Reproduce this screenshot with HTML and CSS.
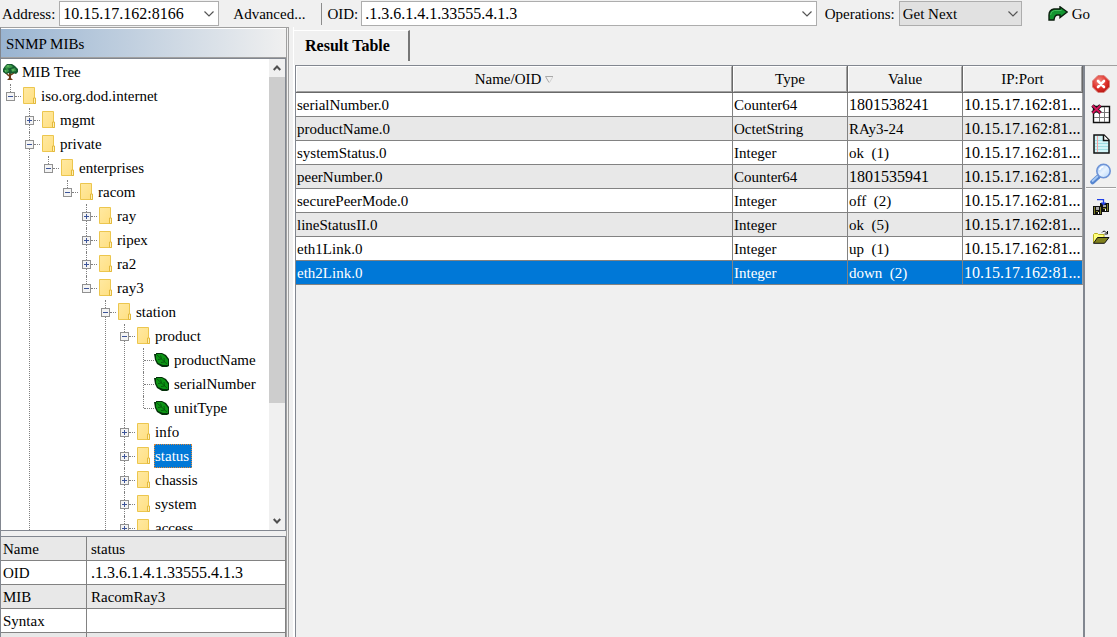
FILE: index.html
```html
<!DOCTYPE html>
<html lang="en">
<head>
<meta charset="utf-8">
<title>MIB Browser</title>
<link rel="stylesheet" href="styles.css">
</head>
<body>
<svg class="defs" aria-hidden="true">
  <defs>
    <linearGradient id="gFolder" x1="0" y1="0" x2="1" y2="1"><stop offset="0" stop-color="#ffe9a2"/><stop offset="1" stop-color="#ffdf80"/></linearGradient>
    <radialGradient id="gRed" cx=".4" cy=".3" r=".8"><stop offset="0" stop-color="#f48a80"/><stop offset=".6" stop-color="#dc2c26"/><stop offset="1" stop-color="#a81512"/></radialGradient>
    <linearGradient id="gLens" x1="0" y1="0" x2="1" y2="1"><stop offset="0" stop-color="#8fbcf5"/><stop offset=".5" stop-color="#e8f3ff"/><stop offset="1" stop-color="#b5d6fa"/></linearGradient>
    <symbol id="folder" viewBox="0 0 16 18"><path d="M2.500 .5h11v11h1v5h-12z" fill="url(#gFolder)" stroke="#ecc64e"/><path d="M12.500 16v-5h2v5.500h-2z" fill="#fff0b8" stroke="#e3b93c"/></symbol>
    <symbol id="leaf" viewBox="0 0 16 16"><path d="M0 2h2V1h6l4 2 3 4v7l-2 1H8l-5-3-2-4z" fill="#04300a"/><path d="M2 3l1-1h5l3 2 3 4v5H9L4 11 2 7z" fill="#0c9414"/><path d="m3 3 10 9M6.500 3.500l1 3M4 7.500l3.500-.5M10 6l.5 4M7 10.500l3.500-.5" stroke="#04500a" stroke-width=".8" fill="none"/></symbol>
    <symbol id="plus" viewBox="0 0 9 9"><rect x=".5" y=".5" width="8" height="8" fill="#f4f4f4" stroke="#919191"/><path d="M2 4.500h5M4.500 2v5" stroke="#3d5599"/></symbol>
    <symbol id="minus" viewBox="0 0 9 9"><rect x=".5" y=".5" width="8" height="8" fill="#f4f4f4" stroke="#919191"/><path d="M2 4.500h5" stroke="#3d5599"/></symbol>
    <symbol id="chev" viewBox="0 0 10 6"><path d="m.5.5 4.500 4.500L9.500.5" fill="none" stroke="#555" stroke-width="1.200"/></symbol>
  </defs>
</svg>

<header class="toolbar">
  <label for="address">Address:</label>
  <span class="combo combo-address"><input id="address" type="text" class="num" value="10.15.17.162:8166"><button type="button" aria-label="Address history"><svg width="10" height="6"><use href="#chev"/></svg></button></span>
  <button type="button" class="flat advanced">Advanced...</button>
  <label for="oid" class="oid-label">OID:</label>
  <span class="combo combo-oid"><input id="oid" type="text" class="num" value=".1.3.6.1.4.1.33555.4.1.3"><button type="button" aria-label="OID history"><svg width="10" height="6"><use href="#chev"/></svg></button></span>
  <label for="ops" class="ops-label">Operations:</label>
  <span class="select-wrap"><select id="ops"><option>Get Next</option></select><svg width="10" height="6"><use href="#chev"/></svg></span>
  <button type="button" class="flat go"><svg width="20" height="15" viewBox="0 0 20 15"><path d="M1 14V9q0-5 5-6h6V.8L19.200 6 12 11.500V9H9Q6.500 9.500 6 14z" fill="#12952f" stroke="#0a1d0d" stroke-width="1.400"/><path d="M2.500 9q.5-4 4-4.500h7" stroke="#40b95a" fill="none"/></svg>Go</button>
</header>

<main class="workspace">
  <aside class="side">
    <h2 class="side-title">SNMP MIBs</h2>
    <div class="tree-box">
      <div class="tree">
        <div class="row root"><svg width="16" height="18" viewBox="0 0 16 18"><path d="M7 9h2v6l2 2H5l2-2z" fill="#6b3a16"/><path d="M3 9 7 13M13 9l-4 3" stroke="#6b3a16" stroke-width="1.500"/><path d="M5 1h5l3 2 3 3v3l-2 2-3-1-2 1-2-1-3 1-3-2V6l2-3z" fill="#175c30"/><path d="M5 2h4l2 2-3 1-4 1-1-2zM2 7l4-1 1 2-3 2zM9 6l4-1 1 3-4 1z" fill="#3d9c48"/><path d="M5 3h2M10 7h2M3 8h1" stroke="#7bc873"/></svg><span class="label">MIB Tree</span></div>
        <ul>
          <li><div class="row"><svg class="exp" width="9" height="9"><use href="#minus"/></svg><i></i><svg width="16" height="18"><use href="#folder"/></svg><span class="label">iso.org.dod.internet</span></div>
          <ul>
            <li><div class="row"><svg class="exp" width="9" height="9"><use href="#plus"/></svg><i></i><svg width="16" height="18"><use href="#folder"/></svg><span class="label">mgmt</span></div></li>
            <li class="more"><div class="row"><svg class="exp" width="9" height="9"><use href="#minus"/></svg><i></i><svg width="16" height="18"><use href="#folder"/></svg><span class="label">private</span></div>
            <ul>
              <li><div class="row"><svg class="exp" width="9" height="9"><use href="#minus"/></svg><i></i><svg width="16" height="18"><use href="#folder"/></svg><span class="label">enterprises</span></div>
              <ul>
                <li><div class="row"><svg class="exp" width="9" height="9"><use href="#minus"/></svg><i></i><svg width="16" height="18"><use href="#folder"/></svg><span class="label">racom</span></div>
                <ul>
                  <li><div class="row"><svg class="exp" width="9" height="9"><use href="#plus"/></svg><i></i><svg width="16" height="18"><use href="#folder"/></svg><span class="label">ray</span></div></li>
                  <li><div class="row"><svg class="exp" width="9" height="9"><use href="#plus"/></svg><i></i><svg width="16" height="18"><use href="#folder"/></svg><span class="label">ripex</span></div></li>
                  <li><div class="row"><svg class="exp" width="9" height="9"><use href="#plus"/></svg><i></i><svg width="16" height="18"><use href="#folder"/></svg><span class="label">ra2</span></div></li>
                  <li><div class="row"><svg class="exp" width="9" height="9"><use href="#minus"/></svg><i></i><svg width="16" height="18"><use href="#folder"/></svg><span class="label">ray3</span></div>
                  <ul>
                    <li class="more"><div class="row"><svg class="exp" width="9" height="9"><use href="#minus"/></svg><i></i><svg width="16" height="18"><use href="#folder"/></svg><span class="label">station</span></div>
                    <ul>
                      <li><div class="row"><svg class="exp" width="9" height="9"><use href="#minus"/></svg><i></i><svg width="16" height="18"><use href="#folder"/></svg><span class="label">product</span></div>
                      <ul>
                        <li><div class="row leaf"><i></i><svg width="16" height="16"><use href="#leaf"/></svg><span class="label">productName</span></div></li>
                        <li><div class="row leaf"><i></i><svg width="16" height="16"><use href="#leaf"/></svg><span class="label">serialNumber</span></div></li>
                        <li><div class="row leaf"><i></i><svg width="16" height="16"><use href="#leaf"/></svg><span class="label">unitType</span></div></li>
                      </ul></li>
                      <li><div class="row"><svg class="exp" width="9" height="9"><use href="#plus"/></svg><i></i><svg width="16" height="18"><use href="#folder"/></svg><span class="label">info</span></div></li>
                      <li><div class="row"><svg class="exp" width="9" height="9"><use href="#plus"/></svg><i></i><svg width="16" height="18"><use href="#folder"/></svg><span class="label selected">status</span></div></li>
                      <li><div class="row"><svg class="exp" width="9" height="9"><use href="#plus"/></svg><i></i><svg width="16" height="18"><use href="#folder"/></svg><span class="label">chassis</span></div></li>
                      <li><div class="row"><svg class="exp" width="9" height="9"><use href="#plus"/></svg><i></i><svg width="16" height="18"><use href="#folder"/></svg><span class="label">system</span></div></li>
                      <li class="more"><div class="row"><svg class="exp" width="9" height="9"><use href="#plus"/></svg><i></i><svg width="16" height="18"><use href="#folder"/></svg><span class="label">access</span></div></li>
                    </ul></li>
                  </ul></li>
                </ul></li>
              </ul></li>
            </ul></li>
          </ul></li>
        </ul>
      </div>
      <div class="scrollbar">
        <button type="button" aria-label="Scroll up"><svg width="8" height="6" viewBox="0 0 8 6"><path d="M.7 5 4 1.500 7.300 5" fill="none" stroke="#505050" stroke-width="2"/></svg></button>
        <div class="track"><div class="thumb"></div></div>
        <button type="button" aria-label="Scroll down"><svg width="8" height="6" viewBox="0 0 8 6"><path d="M.7 1 4 4.500 7.300 1" fill="none" stroke="#505050" stroke-width="2"/></svg></button>
      </div>
    </div>
    <div class="props-box">
      <table class="props">
        <tr><th scope="row">Name</th><td>status</td></tr>
        <tr><th scope="row">OID</th><td class="num">.1.3.6.1.4.1.33555.4.1.3</td></tr>
        <tr><th scope="row">MIB</th><td>RacomRay3</td></tr>
        <tr><th scope="row">Syntax</th><td></td></tr>
        <tr><th></th><td></td></tr>
      </table>
    </div>
  </aside>

  <section class="results">
    <div class="tabs"><button type="button" class="tab">Result Table</button></div>
    <div class="panel">
      <div class="grid-area">
        <table class="grid">
          <colgroup><col><col class="c-type"><col class="c-value"><col class="c-ip"></colgroup>
          <thead><tr><th><span>Name/OID <svg width="8" height="7" viewBox="0 0 8 7"><path d="M8 .5 4.500 6.500" stroke="#d0d0d0"/><path d="M8 .5H.5L4 6.500" fill="none" stroke="#a8a8a8"/></svg></span></th><th><span>Type</span></th><th><span>Value</span></th><th><span>IP:Port</span></th></tr></thead>
          <tbody>
            <tr><td>serialNumber.0</td><td>Counter64</td><td class="num">1801538241</td><td class="num">10.15.17.162:81...</td></tr>
            <tr><td>productName.0</td><td>OctetString</td><td>RAy3-24</td><td class="num">10.15.17.162:81...</td></tr>
            <tr><td>systemStatus.0</td><td>Integer</td><td>ok&nbsp; (1)</td><td class="num">10.15.17.162:81...</td></tr>
            <tr><td>peerNumber.0</td><td>Counter64</td><td class="num">1801535941</td><td class="num">10.15.17.162:81...</td></tr>
            <tr><td>securePeerMode.0</td><td>Integer</td><td>off&nbsp; (2)</td><td class="num">10.15.17.162:81...</td></tr>
            <tr><td>lineStatusII.0</td><td>Integer</td><td>ok&nbsp; (5)</td><td class="num">10.15.17.162:81...</td></tr>
            <tr><td>eth1Link.0</td><td>Integer</td><td>up&nbsp; (1)</td><td class="num">10.15.17.162:81...</td></tr>
            <tr class="current"><td>eth2Link.0</td><td>Integer</td><td>down&nbsp; (2)</td><td class="num">10.15.17.162:81...</td></tr>
          </tbody>
        </table>
      </div>
      <nav class="tools">
        <button type="button" aria-label="Stop"><svg width="18" height="18" viewBox="0 0 18 18"><path d="M6 .5h6L17.500 6v6L12 17.500H6L.5 12V6z" fill="url(#gRed)" stroke="#d9807a"/><path d="m6 6 6 6M12 6l-6 6" stroke="#fff" stroke-width="2.600" stroke-linecap="round"/></svg></button>
        <button type="button" aria-label="Clear table"><svg width="20" height="20" viewBox="0 0 20 20"><path d="M2.500 2.500h16v16h-16z" fill="#fff" stroke="#111" stroke-width="1.400"/><path d="M3 8.500h15M3 13.500h15M8.500 8v10M13.500 3v15" stroke="#777"/><path d="m1.500 1.500 8 7.500m0-7.500-8 7.500" stroke="#111" stroke-width="3.600"/><path d="m1.500 1.500 8 7.500m0-7.500-8 7.500" stroke="#d4145a" stroke-width="2"/></svg></button>
        <button type="button" aria-label="New page"><svg width="17" height="20" viewBox="0 0 17 20"><path d="M1 1h10l5 5v13H1z" fill="#d2f4f7" stroke="#111" stroke-width="1.500"/><path d="M2 6.500h8M2 9.500h13M2 12.500h13M2 15.500h13" stroke="#9edde4"/><path d="M4.500 2v16" stroke="#f4a3a3"/><path d="M10.500 1v5.500H16" fill="#fff" stroke="#111" stroke-width="1.500"/></svg></button>
        <button type="button" aria-label="Find"><svg width="22" height="22" viewBox="0 0 22 22"><path d="m8.500 13.500-6 5.500" stroke="#5585cf" stroke-width="4.500" stroke-linecap="round"/><path d="m8 13-6 5.500" stroke="#a5c8f4" stroke-width="1.800"/><circle cx="13.500" cy="8" r="6.700" fill="url(#gLens)" stroke="#6d93d6" stroke-width="1.600"/><path d="M9.500 7q1-3 4-3.500" stroke="#fff" stroke-width="1.500" fill="none"/></svg></button>
        <hr>
        <button type="button" aria-label="Save all"><svg width="16" height="16" viewBox="0 0 16 16"><path d="M7 4h9v9H7zM0 7h9v9H0z" fill="#111"/><path d="M1 8h1v7H1zM7 8h1v7H7zM14 5h1v7h-1zM3 12h2v1H3zM10 9h3v1h-3z" fill="#80802a"/><path d="M3 8h3v3H3zM10 6h3v2h-3z" fill="#aaa"/><path d="M5 13h1v2H5zM12 10h1v2h-1z" fill="#fff"/><path d="M4 .5h6.500V5M8.500 3.500l2 2 2-2" fill="none" stroke="#2040e8" stroke-width="1.300"/></svg></button>
        <button type="button" aria-label="Open"><svg width="17" height="14" viewBox="0 0 17 14"><path d="M.5 13V4.500l1-1h3l1 1H11V7" fill="#ffff7a" stroke="#b8b020"/><path d="M.5 13.300 4.500 7.500H16L11.500 13.300z" fill="#80801c" stroke="#111"/><path d="M9 2.500q2-3 5 .8M14.500 1v3h-3" fill="none" stroke="#111"/></svg></button>
      </nav>
    </div>
  </section>
</main>
</body>
</html>
```

FILE: styles.css
```css
* { box-sizing: border-box; }
body {
  margin: 0;
  height: 100vh;
  display: flex;
  flex-direction: column;
  overflow: hidden;
  background: #f0f0f0;
  color: #000;
  font: 15px/24px "Liberation Serif", "Times New Roman", serif;
}
button, input, select { font: inherit; color: inherit; margin: 0; }
button { padding: 0; border: 0; background: none; display: flex; align-items: center; justify-content: center; }
svg { display: block; flex: none; }
ul { list-style: none; margin: 0; padding: 0; }
.defs { position: absolute; width: 0; height: 0; }
.num { font-size: 16px; }

/* Toolbar */
.toolbar { display: flex; align-items: center; height: 27px; flex: none; padding-left: 2px; }
.combo { display: flex; height: 25px; background: #fff; border: 1px solid #adadad; }
.combo input { flex: 1; min-width: 0; border: 0; padding: 0 0 0 3px; background: none; outline: 0; }
.combo button { width: 18px; }
.combo-address { width: 160px; margin-left: 4px; }
.combo-oid { flex: 1; margin-left: 3px; }
.advanced { margin-left: 14px; }
.oid-label { margin-left: 16px; padding-left: 5px; border-left: 1px solid #8c8c8c; line-height: 22px; }
.ops-label { margin-left: 8px; }
.select-wrap { position: relative; width: 123px; margin-left: 4px; }
.select-wrap select { display: block; width: 100%; height: 25px; padding: 0 3px; appearance: none; border: 1px solid #adadad; border-radius: 0; background: #e1e1e1; }
.select-wrap svg { position: absolute; right: 4px; top: 10px; pointer-events: none; }
.go { gap: 4px; margin: 0 27px 0 26px; }

/* Workspace */
.workspace { flex: 1; min-height: 0; display: flex; }
.side { width: 289px; flex: none; display: flex; flex-direction: column; border-left: 1px solid #828790; border-right: 3px double #a0a0a0; border-top: 1px solid #a0a0a0; }
.side-title { margin: 0; height: 30px; padding-left: 5px; font: inherit; line-height: 31px; background: linear-gradient(90deg, #99b4d1, #f0f0f0); border-top: 1px solid #fff; border-bottom: 1px solid #a0a0a0; }
.tree-box { flex: 1; min-height: 0; display: flex; border: solid #828790; border-width: 1px 1px 1px 0; background: #fff; }
.tree { flex: 1; overflow: hidden; padding-top: 1px; }
.tree ul ul { margin-left: 19px; }
.row { display: flex; align-items: center; height: 24px; white-space: nowrap; }
.root { padding-left: 1px; gap: 3px; }
.label { padding: 0 1px; margin-left: 3px; }
.root .label { margin-left: 0; }
.selected { padding: 0 2px 0 0; border: 1px dotted #e08a3c; background: #0078d7; color: #fff; line-height: 22px; }
li { position: relative; }
li::before { content: ""; position: absolute; left: 9px; top: 0; height: 100%; border-left: 1px dotted #808080; }
li:last-child::before { height: 12px; }
li.more::before { height: 100%; }
.row .exp { margin-left: 5px; position: relative; }
.row i { width: 6px; border-top: 1px dotted #808080; }
.leaf i { width: 10px; margin-left: 10px; }

.scrollbar { width: 16px; display: flex; flex-direction: column; background: #f0f0f0; }
.scrollbar button { height: 18px; width: 100%; }
.track { flex: 1; }
.thumb { height: 75%; background: #cdcdcd; }

.props-box { flex: 0 0 101px; margin-top: 5px; overflow: hidden; border-top: 1px solid #828790; }
.props { width: 100%; border-collapse: separate; border-spacing: 0; table-layout: fixed; }
.props th, .props td { height: 24px; padding: 1px 0 0 4px; line-height: 22px; border-bottom: 1px solid #828282; text-align: left; font-weight: normal; background: #fff; }
.props th { width: 86px; padding-left: 2px; border-right: 1px solid #828282; }
.props td { border-right: 1px solid #828282; }
.props tr:nth-child(odd) > * { background: #e8e8e8; }

.results { flex: 1; min-width: 0; display: flex; flex-direction: column; margin-left: 4px; }
.tabs { display: flex; height: 38px; padding-top: 3px; border-left: 1px solid #fff; }
.tab { height: 31px; padding: 0 18px 0 11px; font-size: 16px; font-weight: bold; border-top: 1px solid #fff; border-right: 2px solid #767676; }
.panel { flex: 1; min-height: 0; display: flex; border-left: 2px solid #fff; }
.grid-area { flex: 1; min-width: 0; border: solid #828790; border-width: 1px 2px 0 1px; }
.grid { width: 100%; border-collapse: separate; border-spacing: 0; table-layout: fixed; }
.grid th, .grid td { white-space: nowrap; overflow: hidden; }
.c-type, .c-value { width: 115px; }
.c-ip { width: 120px; }
.grid th { height: 27px; padding: 0; font-weight: normal; border: solid #696969; border-width: 0 1px 1px 0; }
.grid th span { display: flex; gap: 4px; align-items: center; justify-content: center; height: 26px; border: 1px solid; border-color: #fff #a0a0a0 #a0a0a0 #fff; }
.grid td { height: 24px; padding: 1px 0 0 1px; line-height: 22px; background: #fff; border: solid #828282; border-width: 0 1px 1px 0; }
.grid td:last-child { border-right-color: #a0a0a0; }
.grid tbody tr:nth-child(even) td { background: #e8e8e8; }
.grid tbody tr.current td { background: #0078d7; color: #fff; }

.tools { width: 32px; flex: none; display: flex; flex-direction: column; align-items: center; padding: 3px 1px; border-top: 1px solid #a0a0a0; }
.tools button { width: 30px; height: 30px; flex: none; }
.tools hr { width: 100%; margin: -2px 0 3px; border: 0; border-top: 1px solid #a0a0a0; border-bottom: 1px solid #fff; }
```
